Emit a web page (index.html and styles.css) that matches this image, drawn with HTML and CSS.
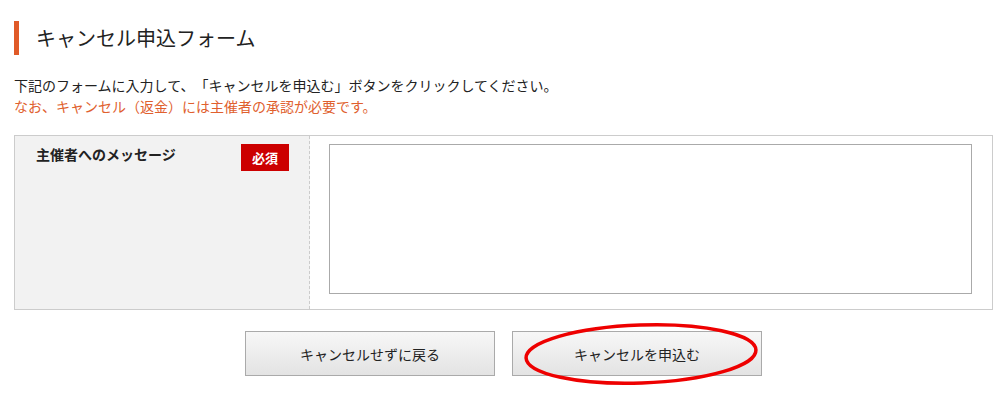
FILE: index.html
```html
<!DOCTYPE html>
<html lang="ja">
<head>
    <meta charset="utf-8">
    <title>キャンセル申込フォーム</title>
    <link rel="stylesheet" href="styles.css">
</head>
<body>
    <div class="page">
        <h1 class="page-title">キャンセル申込フォーム</h1>

        <div class="lead">
            <p>下記のフォームに入力して、「キャンセルを申込む」ボタンをクリックしてください。</p>
            <p class="notice">なお、キャンセル（返金）には主催者の承認が必要です。</p>
        </div>

        <div class="form-table">
            <div class="form-label">
                <span class="label-text">主催者へのメッセージ</span>
                <span class="required">必須</span>
            </div>
            <div class="form-field">
                <textarea class="message"></textarea>
            </div>
        </div>

        <div class="actions">
            <button class="btn">キャンセルせずに戻る</button>
            <button class="btn btn-submit">キャンセルを申込む
                <svg class="mark" viewBox="0 0 240 66" width="240" height="66">
                    <ellipse cx="120" cy="33" rx="115" ry="29" fill="none" stroke="#ee0000" stroke-width="3.5" transform="rotate(-2 120 33)"/>
                </svg>
            </button>
        </div>
    </div>
</body>
</html>
```

FILE: styles.css
```css
body {
    margin: 0;
    font-family: "Noto Sans CJK JP", "Liberation Sans", sans-serif;
    font-size: 14px;
    color: #222;
    background: #fff;
    text-spacing-trim: space-all;
}
.page {
    padding: 21px 14px 20px;
}
.page-title {
    margin: 0;
    height: 34px;
    line-height: 34px;
    border-left: 5px solid #e05a28;
    padding-left: 17px;
    font-size: 20px;
    font-weight: normal;
    color: #222;
}
.lead {
    margin-top: 20px;
}
.lead p {
    margin: 0;
    line-height: 21px;
}
.lead .notice {
    color: #e0602e;
}
.form-table {
    margin-top: 18px;
    display: flex;
    border: 1px solid #ccc;
}
.form-label {
    flex: none;
    box-sizing: border-box;
    width: 295px;
    background: #f2f2f2;
    border-right: 1px dashed #ccc;
    padding: 8px 20px 0 21px;
    display: flex;
    justify-content: space-between;
    align-items: flex-start;
}
.label-text {
    font-weight: bold;
    padding-top: 1px;
    line-height: 18px;
}
.required {
    background: #cc0000;
    color: #fff;
    font-weight: bold;
    font-size: 13px;
    width: 48px;
    height: 27px;
    line-height: 27px;
    text-align: center;
}
.form-field {
    flex: 1;
    padding: 8px 20px 15px 19px;
}
.message {
    display: block;
    box-sizing: border-box;
    width: 100%;
    height: 150px;
    border: 1px solid #aaa;
    resize: none;
    margin: 0;
}
.actions {
    margin-top: 21px;
    display: flex;
    justify-content: center;
    gap: 17px;
}
.btn {
    position: relative;
    width: 250px;
    height: 45px;
    border: 1px solid #aaa;
    background: linear-gradient(#f7f7f7, #e3e3e3);
    font-family: inherit;
    font-size: 14px;
    color: #222;
    cursor: pointer;
}
.mark {
    position: absolute;
    left: 8px;
    top: -11px;
    pointer-events: none;
}
```
